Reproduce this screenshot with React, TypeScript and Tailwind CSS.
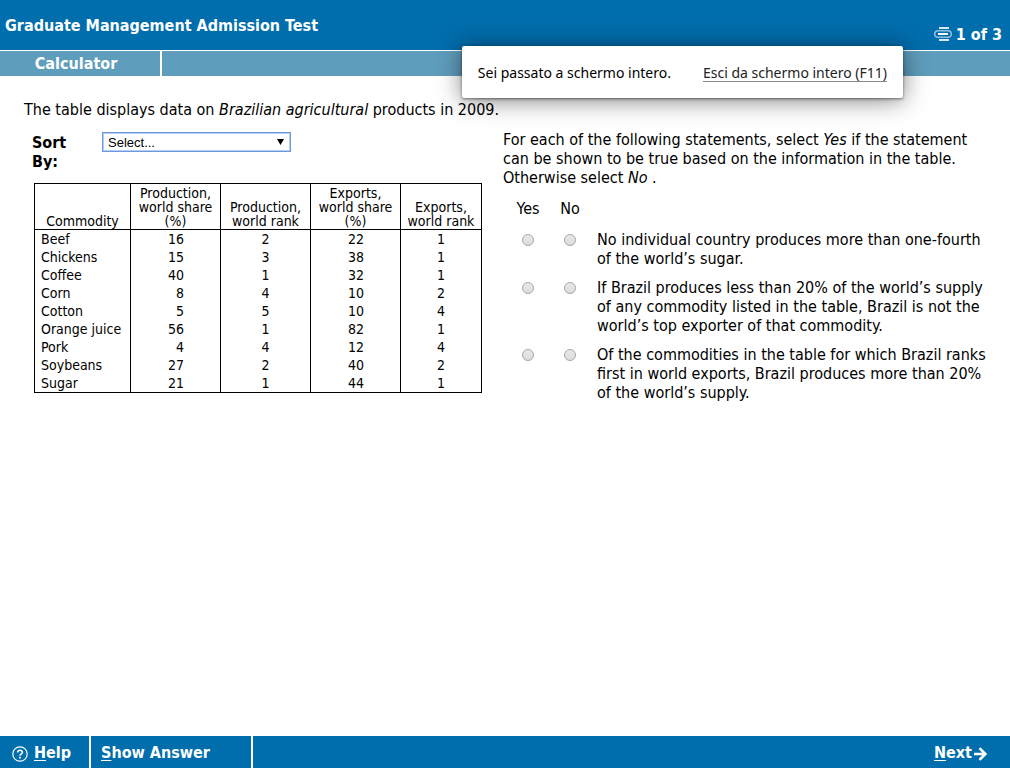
import { useState } from 'react'

type Commodity = {
  name: string
  productionShare: number
  productionRank: number
  exportsShare: number
  exportsRank: number
}

type SortKey = '' | keyof Commodity

const commodities: Commodity[] = [
  { name: 'Beef', productionShare: 16, productionRank: 2, exportsShare: 22, exportsRank: 1 },
  { name: 'Chickens', productionShare: 15, productionRank: 3, exportsShare: 38, exportsRank: 1 },
  { name: 'Coffee', productionShare: 40, productionRank: 1, exportsShare: 32, exportsRank: 1 },
  { name: 'Corn', productionShare: 8, productionRank: 4, exportsShare: 10, exportsRank: 2 },
  { name: 'Cotton', productionShare: 5, productionRank: 5, exportsShare: 10, exportsRank: 4 },
  { name: 'Orange juice', productionShare: 56, productionRank: 1, exportsShare: 82, exportsRank: 1 },
  { name: 'Pork', productionShare: 4, productionRank: 4, exportsShare: 12, exportsRank: 4 },
  { name: 'Soybeans', productionShare: 27, productionRank: 2, exportsShare: 40, exportsRank: 2 },
  { name: 'Sugar', productionShare: 21, productionRank: 1, exportsShare: 44, exportsRank: 1 },
]

const statements = [
  ['No individual country produces more than one-fourth', 'of the world’s sugar.'],
  [
    'If Brazil produces less than 20% of the world’s supply',
    'of any commodity listed in the table, Brazil is not the',
    'world’s top exporter of that commodity.',
  ],
  [
    'Of the commodities in the table for which Brazil ranks',
    'first in world exports, Brazil produces more than 20%',
    'of the world’s supply.',
  ],
]

const Lines = ({ lines }: { lines: string[] }) => (
  <>
    {lines.map((line) => (
      <span key={line} className="block whitespace-nowrap">
        {line}
      </span>
    ))}
  </>
)

const ProgressIcon = () => (
  <svg width="18" height="14" viewBox="0 0 18 14" fill="none" stroke="#d5e8f3" aria-hidden="true">
    <path d="M5 1h10M5 13h10" strokeWidth="2" />
    <rect x="0.75" y="3.75" width="16.5" height="6.5" rx="3.25" stroke="#8fc0dc" strokeWidth="1.5" />
    <path d="M4 7h10" stroke="white" strokeWidth="2" />
  </svg>
)

const HelpIcon = () => (
  <svg width="16" height="16" viewBox="0 0 16 16" fill="none" stroke="white" aria-hidden="true">
    <circle cx="8" cy="8" r="7.2" strokeWidth="1.2" />
    <path d="M5.7 6.4C5.7 3.6 10.4 3.6 10.4 6.3C10.4 8 8 7.8 8 9.8" strokeWidth="1.6" />
    <path d="M8 10.8v1.7" strokeWidth="1.7" />
  </svg>
)

const NextIcon = () => (
  <svg width="13" height="14" viewBox="0 0 13 14" fill="none" stroke="white" strokeWidth="2.6" aria-hidden="true">
    <path d="M0 7h11M5.5 1.2l5.8 5.8l-5.8 5.8" />
  </svg>
)

const Header = () => (
  <header className="text-white">
    <div className="flex h-[51px] items-center justify-between border-b border-white bg-[#006dac] pr-2 pl-[5px]">
      <h1 className="font-bold">Graduate Management Admission Test</h1>
      <div className="flex items-center gap-1 pt-[18px] font-bold">
        <ProgressIcon />
        <span>1 of 3</span>
      </div>
    </div>
    <nav className="flex h-[25px] bg-[#5f9dbc]">
      <button className="w-[162px] border-r-2 border-white pr-2 font-bold">Calculator</button>
    </nav>
  </header>
)

const FullscreenNotice = () => (
  <div className="absolute top-[46px] right-[107px] flex h-[52px] items-center gap-8 rounded-xs bg-white px-4 pt-px font-['Noto_Sans',sans-serif] text-sm whitespace-nowrap shadow-[0_2px_24px_rgba(0,0,0,0.5),0_1px_3px_rgba(0,0,0,0.5)]">
    <span>Sei passato a schermo intero.</span>
    <a href="#exit" className="text-[#222] underline decoration-[#888] underline-offset-3">
      Esci da schermo intero (F11)
    </a>
  </div>
)

const CommodityTable = ({ rows }: { rows: Commodity[] }) => (
  <table className="w-full table-fixed border-collapse border border-black text-sm">
    <colgroup>
      <col className="w-[96px]" />
      <col className="w-[90px]" />
      <col className="w-[90px]" />
      <col className="w-[90px]" />
      <col />
    </colgroup>
    <thead>
      <tr className="h-[46px] border-b border-black align-bottom leading-[14px] [&>th]:border-r [&>th]:border-black [&>th]:p-0 [&>th]:pb-px [&>th]:font-normal">
        <th>Commodity</th>
        <th>
          <Lines lines={['Production,', 'world share', '(%)']} />
        </th>
        <th>
          <Lines lines={['Production,', 'world rank']} />
        </th>
        <th>
          <Lines lines={['Exports,', 'world share', '(%)']} />
        </th>
        <th>
          <Lines lines={['Exports,', 'world rank']} />
        </th>
      </tr>
    </thead>
    <tbody className="leading-[18px]">
      {rows.map((row) => (
        <tr key={row.name} className="[&>td]:border-r [&>td]:border-black [&>td]:py-0">
          <td className="pl-1.5">{row.name}</td>
          <td className="pr-9 text-right">{row.productionShare}</td>
          <td className="text-center">{row.productionRank}</td>
          <td className="pr-9 text-right">{row.exportsShare}</td>
          <td className="text-center">{row.exportsRank}</td>
        </tr>
      ))}
    </tbody>
  </table>
)

const Statements = () => (
  <table className="mt-3 ml-1">
    <thead>
      <tr>
        <th className="w-[42px] pb-3 font-normal">Yes</th>
        <th className="w-[42px] pb-3 font-normal">No</th>
        <th />
      </tr>
    </thead>
    <tbody>
      {statements.map((lines, i) => (
        <tr key={i} className="align-top">
          {['Yes', 'No'].map((answer) => (
            <td key={answer} className="pt-1 text-center">
              <input
                type="radio"
                name={`statement-${i}`}
                value={answer}
                aria-label={answer}
                className="mx-auto block size-3 appearance-none rounded-full border border-[#a8a8a8] bg-linear-to-b from-[#e8e8e8] to-[#dcdcdc] checked:border-4 checked:border-[#555]"
              />
            </td>
          ))}
          <td className="pb-2.5 pl-1.5">
            <Lines lines={lines} />
          </td>
        </tr>
      ))}
    </tbody>
  </table>
)

const Footer = () => (
  <footer className="flex h-8 bg-[#006dac] pb-px font-bold text-white">
    <button className="-mb-px flex w-[91px] items-center gap-1.5 border-r-2 border-white pl-3">
      <span className="pt-1">
        <HelpIcon />
      </span>
      <span>
        <u className="underline-offset-2">H</u>elp
      </span>
    </button>
    <button className="-mb-px w-[162px] border-r-2 border-white pl-2.5 text-left">
      <u className="underline-offset-2">S</u>how Answer
    </button>
    <button className="-mb-px ml-auto flex items-center gap-0.5 pr-[23px]">
      <span>
        <u className="underline-offset-2">N</u>ext
      </span>
      <span className="pt-1">
        <NextIcon />
      </span>
    </button>
  </footer>
)

const App = () => {
  const [sortKey, setSortKey] = useState<SortKey>('')

  const rows = [...commodities]
  if (sortKey) rows.sort((a, b) => (a[sortKey] > b[sortKey] ? 1 : a[sortKey] < b[sortKey] ? -1 : 0))

  return (
    <div className="relative flex min-h-screen flex-col bg-white font-['DejaVu_Sans_Condensed','DejaVu_Sans',sans-serif] text-base leading-[19px] text-black">
      <Header />
      <FullscreenNotice />
      <main className="flex grow pr-1">
        <section className="w-1/2 pt-6 pr-[21px] pl-6">
          <p className="whitespace-nowrap">
            The table displays data on <i>Brazilian agricultural</i> products in 2009.
          </p>
          <div className="mt-3 flex items-start pl-2">
            <label htmlFor="sort" className="w-[70px] pt-0.5 pr-8 font-bold">
              Sort By:
            </label>
            <div className="relative pt-px">
              <select
                id="sort"
                value={sortKey}
                onChange={(e) => setSortKey(e.target.value as SortKey)}
                className="block h-5 w-[189px] appearance-none border border-[#6f97dc] bg-white pl-[5px] font-['Liberation_Sans',sans-serif] text-[13px] ring-1 ring-[#b4cdf5] ring-inset"
              >
                <option value="">Select...</option>
                <option value="name">Commodity</option>
                <option value="productionShare">Production, world share (%)</option>
                <option value="productionRank">Production, world rank</option>
                <option value="exportsShare">Exports, world share (%)</option>
                <option value="exportsRank">Exports, world rank</option>
              </select>
              <svg className="pointer-events-none absolute top-2 right-[7px]" width="7" height="6" viewBox="0 0 7 6">
                <path d="M0 0h7L3.5 6z" />
              </svg>
            </div>
          </div>
          <div className="mt-3 pl-2.5">
            <CommodityTable rows={rows} />
          </div>
        </section>
        <section className="w-1/2 pt-[54px]">
          <p className="whitespace-nowrap">
            For each of the following statements, select <i>Yes</i> if the statement
            <br />
            can be shown to be true based on the information in the table.
            <br />
            Otherwise select <i>No</i> .
          </p>
          <Statements />
        </section>
      </main>
      <Footer />
    </div>
  )
}

export default App
